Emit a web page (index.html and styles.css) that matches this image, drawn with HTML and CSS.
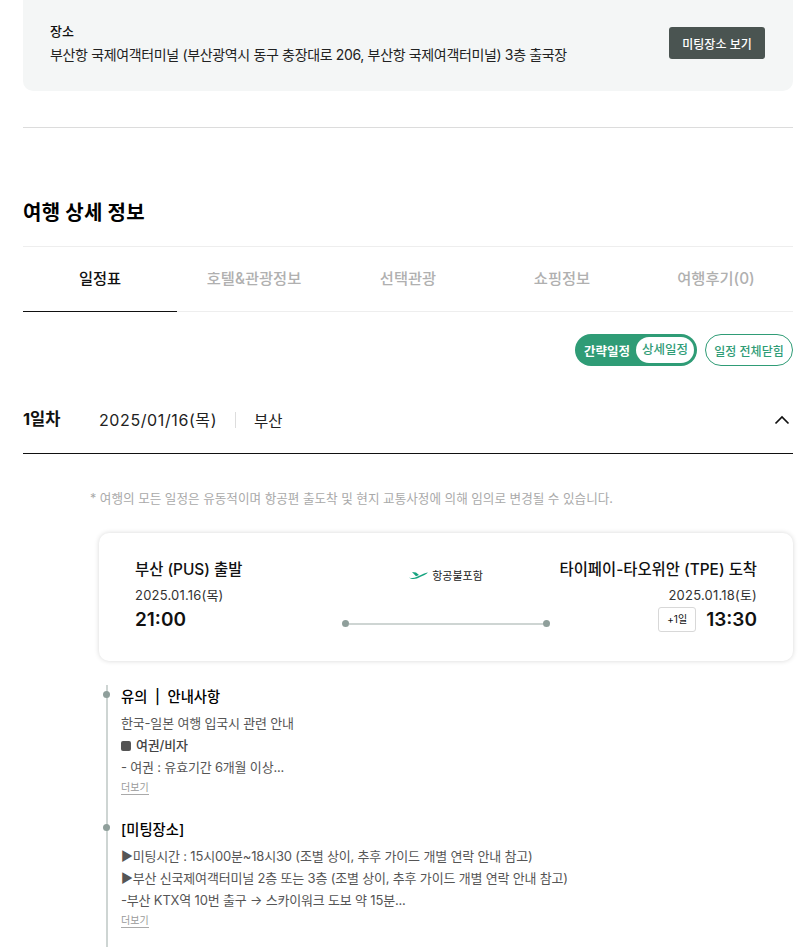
FILE: index.html
```html
<!DOCTYPE html>
<html lang="ko">
<head>
  <meta charset="utf-8">
  <title>여행 상세 정보</title>
  <link rel="stylesheet" href="styles.css">
</head>
<body>
  <div class="wrap">
    <div class="place-box">
      <div>
        <div class="place-label">장소</div>
        <div class="place-text">부산항 국제여객터미널 (부산광역시 동구 충장대로 206, 부산항 국제여객터미널) 3층 출국장</div>
      </div>
      <button class="place-btn">미팅장소 보기</button>
    </div>
    <hr class="divider">

    <h2 class="section-title">여행 상세 정보</h2>

    <div class="tabs">
      <div class="tab active">일정표</div>
      <div class="tab">호텔&amp;관광정보</div>
      <div class="tab">선택관광</div>
      <div class="tab">쇼핑정보</div>
      <div class="tab">여행후기(0)</div>
    </div>

    <div class="toggle-row">
      <div class="toggle">
        <span class="toggle-off">간략일정</span>
        <span class="toggle-on">상세일정</span>
      </div>
      <button class="close-all">일정 전체닫힘</button>
    </div>

    <div class="day-head">
      <span class="day-num">1일차</span>
      <span class="day-date">2025/01/16(목)</span>
      <span class="day-city">부산</span>
      <svg class="day-arrow" width="16" height="10" viewBox="0 0 16 10">
        <path d="M1.5 8.5 L8 2 L14.5 8.5" fill="none" stroke="#111" stroke-width="1.7"/>
      </svg>
    </div>

    <p class="notice">* 여행의 모든 일정은 유동적이며 항공편 출도착 및 현지 교통사정에 의해 임의로 변경될 수 있습니다.</p>

    <div class="flight-card">
      <div class="flight-side">
        <div class="flight-title">부산 (PUS) 출발</div>
        <div class="flight-date">2025.01.16(목)</div>
        <div class="flight-time">21:00</div>
      </div>
      <div class="flight-mid">
        <div class="airline">
          <svg width="19" height="9" viewBox="0 0 19 9">
            <path d="M0 6.500 C3 7.500 5 7 7.500 6 L13 3.500 C15 2.500 17 1.500 19 1.500 C17.500 3.500 14 4.500 11 6 C8 7.500 4 9.500 0 6.500 Z M3 1 L7 1.500 L10 4 L7 5.300 Z" fill="#14a37f"/>
          </svg>
          <span>항공불포함</span>
        </div>
        <div class="route"><i class="route-dot"></i><i class="route-line"></i><i class="route-dot"></i></div>
      </div>
      <div class="flight-side right">
        <div class="flight-title">타이페이-타오위안 (TPE) 도착</div>
        <div class="flight-date">2025.01.18(토)</div>
        <div class="flight-time"><span class="plus-day">+1일</span>13:30</div>
      </div>
    </div>

    <div class="timeline">
      <div class="tl-item">
        <div class="tl-title">유의 &nbsp;|&nbsp; 안내사항</div>
        <div class="tl-line">한국-일본 여행 입국시 관련 안내</div>
        <div class="tl-line strong"><i class="square"></i>여권/비자</div>
        <div class="tl-line">- 여권 : 유효기간 6개월 이상...</div>
        <a class="more">더보기</a>
      </div>
      <div class="tl-item">
        <div class="tl-title">[미팅장소]</div>
        <div class="tl-line">▶미팅시간 : 15시00분~18시30 (조별 상이, 추후 가이드 개별 연락 안내 참고)</div>
        <div class="tl-line">▶부산 신국제여객터미널 2층 또는 3층 (조별 상이, 추후 가이드 개별 연락 안내 참고)</div>
        <div class="tl-line">-부산 KTX역 10번 출구 → 스카이워크 도보 약 15분...</div>
        <a class="more">더보기</a>
      </div>
    </div>
  </div>
</body>
</html>
```

FILE: styles.css
```css
html, body {
  height: 947px;
  overflow: hidden;
}

body {
  margin: 0;
  background-color: #fff;
  color: #111;
  font-family: Inter, "Noto Sans CJK KR", sans-serif;
}

.wrap {
  margin: 0 19px 0 23px;
}

.place-box {
  display: flex;
  align-items: center;
  justify-content: space-between;
  height: 91px;
  padding: 0 28px 5px 27px;
  box-sizing: border-box;
  background-color: #f4f6f6;
  border-radius: 0 0 10px 10px;
}

.place-label {
  font-size: 13px;
  font-weight: 500;
  line-height: 20px;
  margin-bottom: 4px;
}

.place-text {
  font-size: 14px;
  line-height: 20px;
  letter-spacing: -0.35px;
  color: #222;
}

.place-btn {
  width: 96px;
  height: 32px;
  padding: 0;
  border: none;
  border-radius: 3px;
  background-color: #4a5451;
  color: #fff;
  font-family: inherit;
  font-size: 12px;
  font-weight: 500;
}

.divider {
  height: 1px;
  margin: 36px 0 0;
  border: none;
  background-color: #dcdcdc;
}

.section-title {
  margin: 70px 0 18px;
  font-size: 20px;
  font-weight: 700;
  line-height: 30px;
  letter-spacing: 0.25px;
  color: #000;
}

.tabs {
  display: flex;
  height: 64px;
  border-top: 1px solid #eee;
  border-bottom: 1px solid #eee;
}

.tab {
  flex: 1;
  margin-bottom: -1px;
  text-align: center;
  line-height: 63px;
  font-size: 15.300px;
  font-weight: 500;
  color: #b0b0b0;
}

.tab.active {
  color: #111;
  border-bottom: 1px solid #111;
}

.toggle-row {
  display: flex;
  justify-content: flex-end;
  gap: 8px;
  margin-top: 22px;
}

.toggle {
  display: flex;
  align-items: center;
  box-sizing: border-box;
  width: 122px;
  height: 32px;
  padding: 3px;
  border-radius: 16px;
  background-color: #2f9c76;
  font-size: 12.500px;
  font-weight: 500;
}

.toggle-off {
  flex: 1;
  text-align: center;
  color: #fff;
  font-weight: 700;
}

.toggle-on {
  width: 58px;
  height: 26px;
  line-height: 25px;
  text-align: center;
  border-radius: 13px;
  background-color: #fff;
  color: #2f9c76;
}

.close-all {
  width: 88px;
  height: 32px;
  padding: 0;
  border: 1px solid #2f9c76;
  border-radius: 16px;
  background-color: #fff;
  color: #2f9c76;
  font-family: inherit;
  font-size: 12px;
  font-weight: 500;
}

.day-head {
  display: flex;
  align-items: center;
  height: 67px;
  margin-top: 20px;
  border-bottom: 1px solid #111;
}

.day-num {
  width: 76px;
  font-size: 16.500px;
  font-weight: 700;
  margin-top: -3px;
}

.day-date {
  font-size: 16px;
  letter-spacing: 0.6px;
  color: #222;
  padding-right: 18px;
  border-right: 1px solid #ddd;
  line-height: 16px;
}

.day-city {
  flex: 1;
  margin-left: 18px;
  font-size: 15.500px;
  color: #222;
}

.day-arrow {
  margin-right: 3px;
}

.notice {
  margin: 36px 0 0 67px;
  font-size: 12.600px;
  line-height: 18px;
  color: #a9a9a9;
}

.flight-card {
  display: flex;
  justify-content: space-between;
  box-sizing: border-box;
  height: 128px;
  margin: 25px 0 0 76px;
  padding: 25px 36px 0;
  border-radius: 10px;
  background-color: #fff;
  box-shadow: 0 0 5px rgba(0, 0, 0, 0.16);
}

.flight-side {
  width: 240px;
}

.flight-side.right {
  text-align: right;
}

.flight-title {
  font-size: 15.400px;
  font-weight: 500;
  line-height: 24px;
}

.flight-date {
  margin-top: 4px;
  font-size: 13px;
  letter-spacing: 0.2px;
  line-height: 18px;
  color: #333;
}

.flight-time {
  display: flex;
  align-items: center;
  height: 26px;
  margin-top: 2px;
  font-size: 19px;
  font-weight: 600;
}

.right .flight-time {
  justify-content: flex-end;
}

.plus-day {
  width: 38px;
  height: 25px;
  margin-right: 10px;
  border: 1px solid #d8d8d8;
  border-radius: 3px;
  box-sizing: border-box;
  font-size: 10px;
  font-weight: 400;
  line-height: 23px;
  text-align: center;
}

.flight-mid {
  display: flex;
  flex-direction: column;
  align-items: center;
  width: 208px;
  flex-shrink: 0;
  margin: 0 -27px;
}

.airline {
  display: flex;
  align-items: center;
  gap: 4px;
  height: 24px;
  margin-top: 5px;
  font-size: 11px;
  color: #222;
}

.route {
  display: flex;
  align-items: center;
  width: 100%;
  margin-top: 33px;
}

.route-dot {
  width: 7px;
  height: 7px;
  border-radius: 50%;
  background-color: #8f9f9b;
}

.route-line {
  flex: 1;
  height: 2px;
  background-color: #ced5d3;
}

.timeline {
  margin: 24px 0 0 83px;
  border-left: 2px solid #ced5d3;
  height: 300px;
}

.tl-item {
  position: relative;
  padding-left: 13px;
  margin-bottom: 23px;
}

.tl-item::before {
  content: "";
  position: absolute;
  left: -5px;
  top: 6px;
  width: 7px;
  height: 7px;
  border-radius: 50%;
  background-color: #8f9f9b;
}

.tl-title {
  font-size: 14.300px;
  font-weight: 500;
  line-height: 24px;
  margin-bottom: 3px;
  color: #000;
}

.tl-line {
  font-size: 13px;
  letter-spacing: -0.18px;
  line-height: 22px;
  color: #555;
  white-space: nowrap;
}

.tl-line.strong {
  font-weight: 500;
  color: #444;
}

.square {
  display: inline-block;
  width: 10px;
  height: 10px;
  margin-right: 5px;
  border-radius: 2px;
  background-color: #555;
  vertical-align: -1px;
}

.more {
  display: block;
  width: fit-content;
  margin-top: 2px;
  font-size: 10px;
  line-height: 14px;
  color: #999;
  border-bottom: 1px solid #aaa;
}
```
